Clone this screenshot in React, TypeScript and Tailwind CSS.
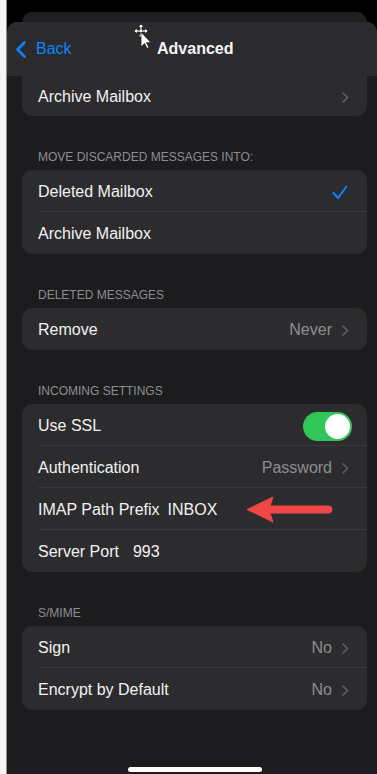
import React from "react";

const font = { fontFamily: '"Liberation Sans", Arial, sans-serif' };

function Chevron() {
  return (
    <svg width="7" height="11" viewBox="0 0 7 11" className="shrink-0">
      <path d="M1 1l4.5 4.5L1 10" fill="none" stroke="#5f5f64" strokeWidth="1.6" strokeLinecap="round" strokeLinejoin="round" />
    </svg>
  );
}

function Header({ children }: { children: React.ReactNode }) {
  return (
    <div className="mt-[33px] mb-[5px] pl-[31px] text-[12px] leading-[16px] text-[#8d8d92]">
      {children}
    </div>
  );
}

function Row({
  label,
  value,
  chevron,
  last,
  children,
}: {
  label: string;
  value?: string;
  chevron?: boolean;
  last?: boolean;
  children?: React.ReactNode;
}) {
  return (
    <div className="relative h-[42px] flex items-center pl-[16px] pr-[18px] pt-[2px]">
      <span className="text-[16px] text-[#f2f2f2] whitespace-nowrap">{label}</span>
      {children}
      <div className="ml-auto flex items-center gap-[10px]">
        {value && <span className="text-[16px] text-[#8d8d92]">{value}</span>}
        {chevron && <Chevron />}
      </div>
      {!last && <div className="absolute left-[16px] right-0 bottom-0 h-px bg-[#3a3a3c]" />}
    </div>
  );
}

function Card({ children, className = "" }: { children: React.ReactNode; className?: string }) {
  return <div className={`ml-[15px] mr-[10px] bg-[#2c2c2e] rounded-[10px] ${className}`}>{children}</div>;
}

export default function App() {
  return (
    <div className="w-[377px] h-[774px] flex bg-black overflow-hidden" style={font}>
      <div className="w-[6px] bg-[#f4f4f4]" />
      <div className="w-px bg-[#8c8c8c]" />

      <div className="flex-1 flex flex-col">
        {/* stacked sheet behind */}
        <div className="h-[22px] pt-[12px] pl-[15px] pr-[10px]">
          <div className="h-full rounded-t-[10px] bg-[#1f1f21]" />
        </div>

        <div className="relative flex-1 flex flex-col bg-[#1c1c1e] rounded-t-[10px] overflow-hidden">
          {/* nav bar */}
          <div className="relative h-[54px] bg-[#2b2b2d] flex items-center pl-[8px]">
            <svg width="12" height="17" viewBox="0 0 12 17" className="mt-[1px]">
              <path d="M9.5 1.5L2.5 8.5l7 7" fill="none" stroke="#0a84ff" strokeWidth="2.6" strokeLinecap="round" strokeLinejoin="round" />
            </svg>
            <span className="ml-[9px] text-[16px] text-[#0a84ff]">Back</span>
            <span className="absolute left-[150px] top-1/2 -translate-y-1/2 text-[16px] font-bold text-[#f5f5f5]">Advanced</span>
            {/* mouse cursor */}
            <svg width="20" height="26" viewBox="0 0 20 26" className="absolute left-[125px] top-[1px]">
              <g fill="#fff" stroke="#222" strokeWidth="0.8">
                <path d="M9 1l3 3h-2v3h3V5l3 3-3 3V9h-3v3h2l-3 3-3-3h2V9H5v2L2 8l3-3v2h3V4H6z" />
                <path d="M9 9v15l3.5-3.5 2.5 5 2-1-2.5-4.8H19z" />
              </g>
            </svg>
          </div>

          <Card className="rounded-t-none h-[40px]">
            <div className="h-full flex items-center pl-[16px] pr-[18px] pt-[2px]">
              <span className="text-[16px] text-[#f2f2f2]">Archive Mailbox</span>
              <div className="ml-auto">
                <Chevron />
              </div>
            </div>
          </Card>

          <Header>MOVE DISCARDED MESSAGES INTO:</Header>
          <Card>
            <div className="relative h-[42px] flex items-center pl-[16px] pr-[19px] pt-[2px]">
              <span className="text-[16px] text-[#f2f2f2]">Deleted Mailbox</span>
              <svg width="16" height="15" viewBox="0 0 16 15" className="ml-auto">
                <path d="M1.5 8l4.5 5L14.5 1.5" fill="none" stroke="#0a84ff" strokeWidth="2" strokeLinecap="round" strokeLinejoin="round" />
              </svg>
              <div className="absolute left-[16px] right-0 bottom-0 h-px bg-[#3a3a3c]" />
            </div>
            <Row label="Archive Mailbox" last />
          </Card>

          <Header>DELETED MESSAGES</Header>
          <Card>
            <Row label="Remove" value="Never" chevron last />
          </Card>

          <Header>INCOMING SETTINGS</Header>
          <Card>
            <div className="relative h-[42px] flex items-center pl-[16px] pr-[15px] pt-[2px]">
              <span className="text-[16px] text-[#f2f2f2]">Use SSL</span>
              <div className="ml-auto w-[49px] h-[29px] rounded-full bg-[#31c55a] flex items-center justify-end pr-[2px]">
                <div className="w-[25px] h-[25px] rounded-full bg-white" />
              </div>
              <div className="absolute left-[16px] right-0 bottom-0 h-px bg-[#3a3a3c]" />
            </div>
            <Row label="Authentication" value="Password" chevron />
            <Row label="IMAP Path Prefix">
              <span className="ml-[8px] text-[16px] text-[#f2f2f2]">INBOX</span>
              <svg width="88" height="28" viewBox="0 0 88 28" className="absolute left-[224px] top-[8px]">
                <path
                  d="M1 13.5L27 1l-3 9h58.5a3.5 3.5 0 0 1 0 7H24l3 9z"
                  fill="#ef4646"
                  stroke="#ef4646"
                  strokeWidth="1"
                  strokeLinejoin="round"
                />
              </svg>
            </Row>
            <Row label="Server Port" last>
              <span className="ml-[14px] text-[16px] text-[#f2f2f2]">993</span>
            </Row>
          </Card>

          <Header>S/MIME</Header>
          <Card>
            <Row label="Sign" value="No" chevron />
            <Row label="Encrypt by Default" value="No" chevron last />
          </Card>

          <div className="mt-auto mb-[2px] flex justify-center pl-[6px]">
            <div className="w-[134px] h-[5px] rounded-full bg-white" />
          </div>
        </div>
      </div>
    </div>
  );
}
